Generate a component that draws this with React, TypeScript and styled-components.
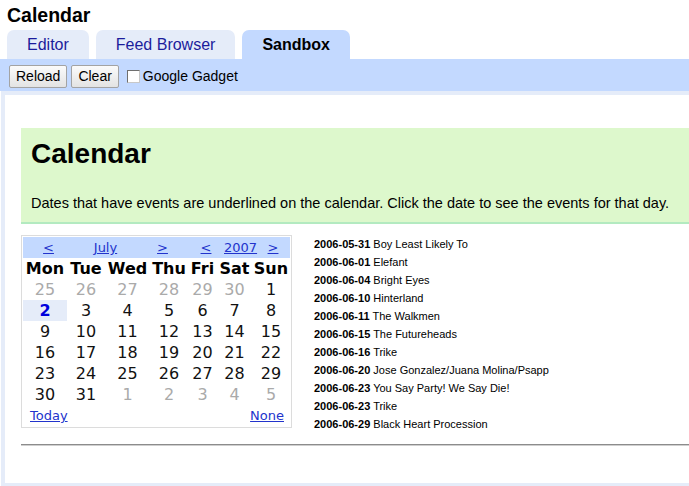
import React from "react";
import styled, { createGlobalStyle } from "styled-components";

const Global = createGlobalStyle`
  html, body { margin: 0; padding: 0; background: #fff; overflow: hidden; }
  body { font-family: "Liberation Sans", Arial, sans-serif; color: #000; }
`;

const Page = styled.div`
  width: 689px;
  height: 486px;
  display: flex;
  flex-direction: column;
  overflow: hidden;
`;

const Title = styled.h1`
  margin: 4px 0 4px 7px;
  font-size: 19.5px;
  line-height: 22px;
  font-weight: bold;
`;

const TabBar = styled.div`
  display: flex;
  gap: 7px;
  padding-left: 7px;
`;

const Tab = styled.div<{ $active?: boolean }>`
  height: 29px;
  line-height: 29px;
  padding: 0 20px;
  font-size: 16px;
  border-radius: 7px 7px 0 0;
  background: ${(p) => (p.$active ? "#c3d9ff" : "#e5ecf9")};
  color: ${(p) => (p.$active ? "#000" : "#1c1c9c")};
  font-weight: ${(p) => (p.$active ? "bold" : "normal")};
`;

const Toolbar = styled.div`
  display: flex;
  align-items: center;
  height: 32px;
  box-sizing: border-box;
  padding: 2px 9px 0 9px;
  background: #c3d9ff;
`;

const Button = styled.button`
  height: 23px;
  padding: 0 6px;
  margin-right: 4px;
  font-family: "Liberation Sans", Arial, sans-serif;
  font-size: 14px;
  color: #000;
  border: 1px solid #a3a3a3;
  border-radius: 2px;
  background: linear-gradient(#fbfbfb, #e3e3e3);
`;

const CheckLabel = styled.label`
  display: flex;
  align-items: center;
  margin-left: 4px;
  font-size: 14px;
`;

const Check = styled.input`
  appearance: none;
  width: 13px;
  height: 13px;
  margin: 0 3px 0 0;
  border: 1px solid #6f6f6f;
  border-right-color: #c8c8c8;
  border-bottom-color: #c8c8c8;
  background: #fff;
`;

const Panel = styled.div`
  flex: 1;
  margin-left: 1px;
  border: 4px solid #e5ecf9;
  border-right: none;
  border-bottom-width: 3px;
  padding: 33px 0 0 16px;
  background: #fff;
`;

const Banner = styled.div`
  background: #ddf8cc;
  border-bottom: 2px solid #b3eac0;
  padding: 10px 10px 10px 10px;
`;

const BannerTitle = styled.h2`
  margin: 0;
  font-size: 28px;
  line-height: 32px;
  font-weight: bold;
`;

const BannerText = styled.p`
  margin: 25px 0 0 0;
  font-size: 14.5px;
  line-height: 17px;
  white-space: nowrap;
`;

const Body = styled.div`
  display: flex;
  align-items: flex-start;
  margin-top: 11px;
`;

const Cal = styled.div`
  width: 267px;
  border: 1px solid #dcdcdc;
  padding: 1px;
  font-family: "DejaVu Sans", Verdana, sans-serif;
`;

const NavRow = styled.div`
  display: grid;
  grid-template-columns: 51px 63px 51px 36px 32px 34px;
  height: 21px;
  align-items: center;
  background: #c3d9ff;
`;

const NavLink = styled.a`
  text-align: center;
  font-size: 13px;
  color: #2233cc;
  text-decoration: underline;
`;

const Grid = styled.div`
  display: grid;
  grid-template-columns: 44px 38px 45px 38px 29px 35px 38px;
  grid-auto-rows: 21px;
`;

const WeekDay = styled.div`
  display: flex;
  align-items: center;
  justify-content: center;
  font-size: 16px;
  font-weight: bold;
  color: #000;
`;

const Day = styled.div<{ $other?: boolean; $today?: boolean }>`
  display: flex;
  align-items: center;
  justify-content: center;
  font-size: 16px;
  color: ${(p) => (p.$today ? "#0000dd" : p.$other ? "#aaaaaa" : "#111")};
  font-weight: ${(p) => (p.$today ? "bold" : "normal")};
  background: ${(p) => (p.$today ? "#e5ecf9" : "transparent")};
`;

const CalFoot = styled.div`
  display: flex;
  justify-content: space-between;
  align-items: center;
  height: 21px;
  padding: 0 6px 0 7px;
`;

const FootLink = styled.a`
  font-size: 13px;
  color: #2233cc;
  text-decoration: underline;
`;

const Events = styled.div`
  margin-left: 22px;
  font-size: 11px;
  line-height: 18px;
`;

const EventRow = styled.div`
  white-space: nowrap;
`;

const EventDate = styled.b`
  font-weight: bold;
`;

const Rule = styled.div`
  margin-top: 11px;
  border-top: 1px solid #8c8c8c;
  border-bottom: 1px solid #cfcfcf;
`;

const weekDays = ["Mon", "Tue", "Wed", "Thu", "Fri", "Sat", "Sun"];

const days: { n: number; other?: boolean; today?: boolean }[] = [
  ...[25, 26, 27, 28, 29, 30].map((n) => ({ n, other: true })),
  ...Array.from({ length: 31 }, (_, i) => ({ n: i + 1, today: i + 1 === 2 })),
  ...[1, 2, 3, 4, 5].map((n) => ({ n, other: true })),
];

const events: [string, string][] = [
  ["2006-05-31", "Boy Least Likely To"],
  ["2006-06-01", "Elefant"],
  ["2006-06-04", "Bright Eyes"],
  ["2006-06-10", "Hinterland"],
  ["2006-06-11", "The Walkmen"],
  ["2006-06-15", "The Futureheads"],
  ["2006-06-16", "Trike"],
  ["2006-06-20", "Jose Gonzalez/Juana Molina/Psapp"],
  ["2006-06-23", "You Say Party! We Say Die!"],
  ["2006-06-23", "Trike"],
  ["2006-06-29", "Black Heart Procession"],
];

export default function App() {
  return (
    <Page>
      <Global />
      <Title>Calendar</Title>
      <TabBar>
        <Tab>Editor</Tab>
        <Tab>Feed Browser</Tab>
        <Tab $active>Sandbox</Tab>
      </TabBar>
      <Toolbar>
        <Button>Reload</Button>
        <Button>Clear</Button>
        <CheckLabel>
          <Check type="checkbox" />
          Google Gadget
        </CheckLabel>
      </Toolbar>
      <Panel>
        <Banner>
          <BannerTitle>Calendar</BannerTitle>
          <BannerText>
            Dates that have events are underlined on the calendar. Click the date to see the events for that day.
          </BannerText>
        </Banner>
        <Body>
          <Cal>
            <NavRow>
              <NavLink>&lt;</NavLink>
              <NavLink>July</NavLink>
              <NavLink>&gt;</NavLink>
              <NavLink>&lt;</NavLink>
              <NavLink>2007</NavLink>
              <NavLink>&gt;</NavLink>
            </NavRow>
            <Grid>
              {weekDays.map((d) => (
                <WeekDay key={d}>{d}</WeekDay>
              ))}
              {days.map((d, i) => (
                <Day key={i} $other={d.other} $today={d.today}>
                  {d.n}
                </Day>
              ))}
            </Grid>
            <CalFoot>
              <FootLink>Today</FootLink>
              <FootLink>None</FootLink>
            </CalFoot>
          </Cal>
          <Events>
            {events.map(([date, name], i) => (
              <EventRow key={i}>
                <EventDate>{date}</EventDate> {name}
              </EventRow>
            ))}
          </Events>
        </Body>
        <Rule />
      </Panel>
    </Page>
  );
}
